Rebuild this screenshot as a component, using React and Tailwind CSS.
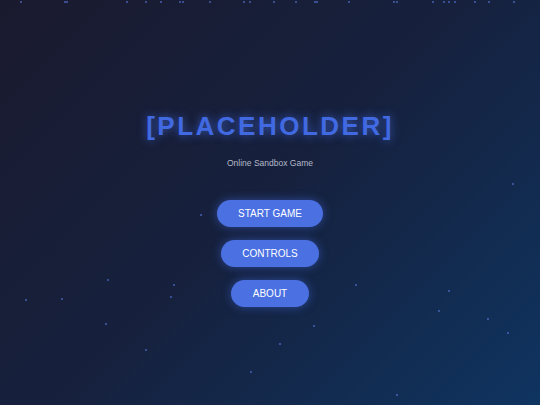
const stars = [
  [20, 1], [64, 1], [66, 1], [126, 1], [145, 1], [160, 1], [179, 1], [182, 1],
  [209, 1], [243, 1], [249, 1], [273, 1], [295, 1], [314, 1], [316, 1], [348, 1],
  [393, 1], [396, 1], [432, 1], [443, 1], [448, 1], [454, 1], [474, 1], [488, 1], [513, 1],
  [107, 279], [173, 284], [25, 299], [61, 298], [170, 296], [105, 323], [145, 349],
  [355, 284], [448, 290], [438, 310], [487, 318], [507, 332], [313, 325], [279, 343],
  [250, 371], [512, 183], [200, 214], [396, 394],
];

const buttons = ['START GAME', 'CONTROLS', 'ABOUT'];

export default function App() {
  return (
    <div
      className="relative w-full h-screen overflow-hidden bg-[linear-gradient(135deg,#1a1a2e_0%,#16213e_50%,#0f3460_100%)]"
      style={{ fontFamily: '"Liberation Sans", Arial, sans-serif' }}
    >
      {stars.map(([x, y], i) => (
        <div
          key={i}
          className="absolute w-[1.5px] h-[1.5px] rounded-full bg-[#5a7ae6] opacity-70"
          style={{ left: x, top: y }}
        />
      ))}

      <div className="relative flex flex-col items-center pt-[111px]">
        <h1 className="text-[26px] leading-[30px] font-bold tracking-[2.5px] text-[#4169e1] [text-shadow:0_0_10px_rgba(65,105,225,0.8)]">
          [PLACEHOLDER]
        </h1>
        <p className="mt-[16px] text-[8.5px] leading-[12px] text-[#b4b8c8]">
          Online Sandbox Game
        </p>
        <div className="mt-[31px] flex flex-col items-center gap-[13px]">
          {buttons.map((label) => (
            <button
              key={label}
              type="button"
              className="h-[27px] px-[21.5px] rounded-full bg-[#4a70e2] text-white text-[10px] shadow-[0_0_10px_rgba(65,105,225,0.55)]"
            >
              {label}
            </button>
          ))}
        </div>
      </div>
    </div>
  );
}
